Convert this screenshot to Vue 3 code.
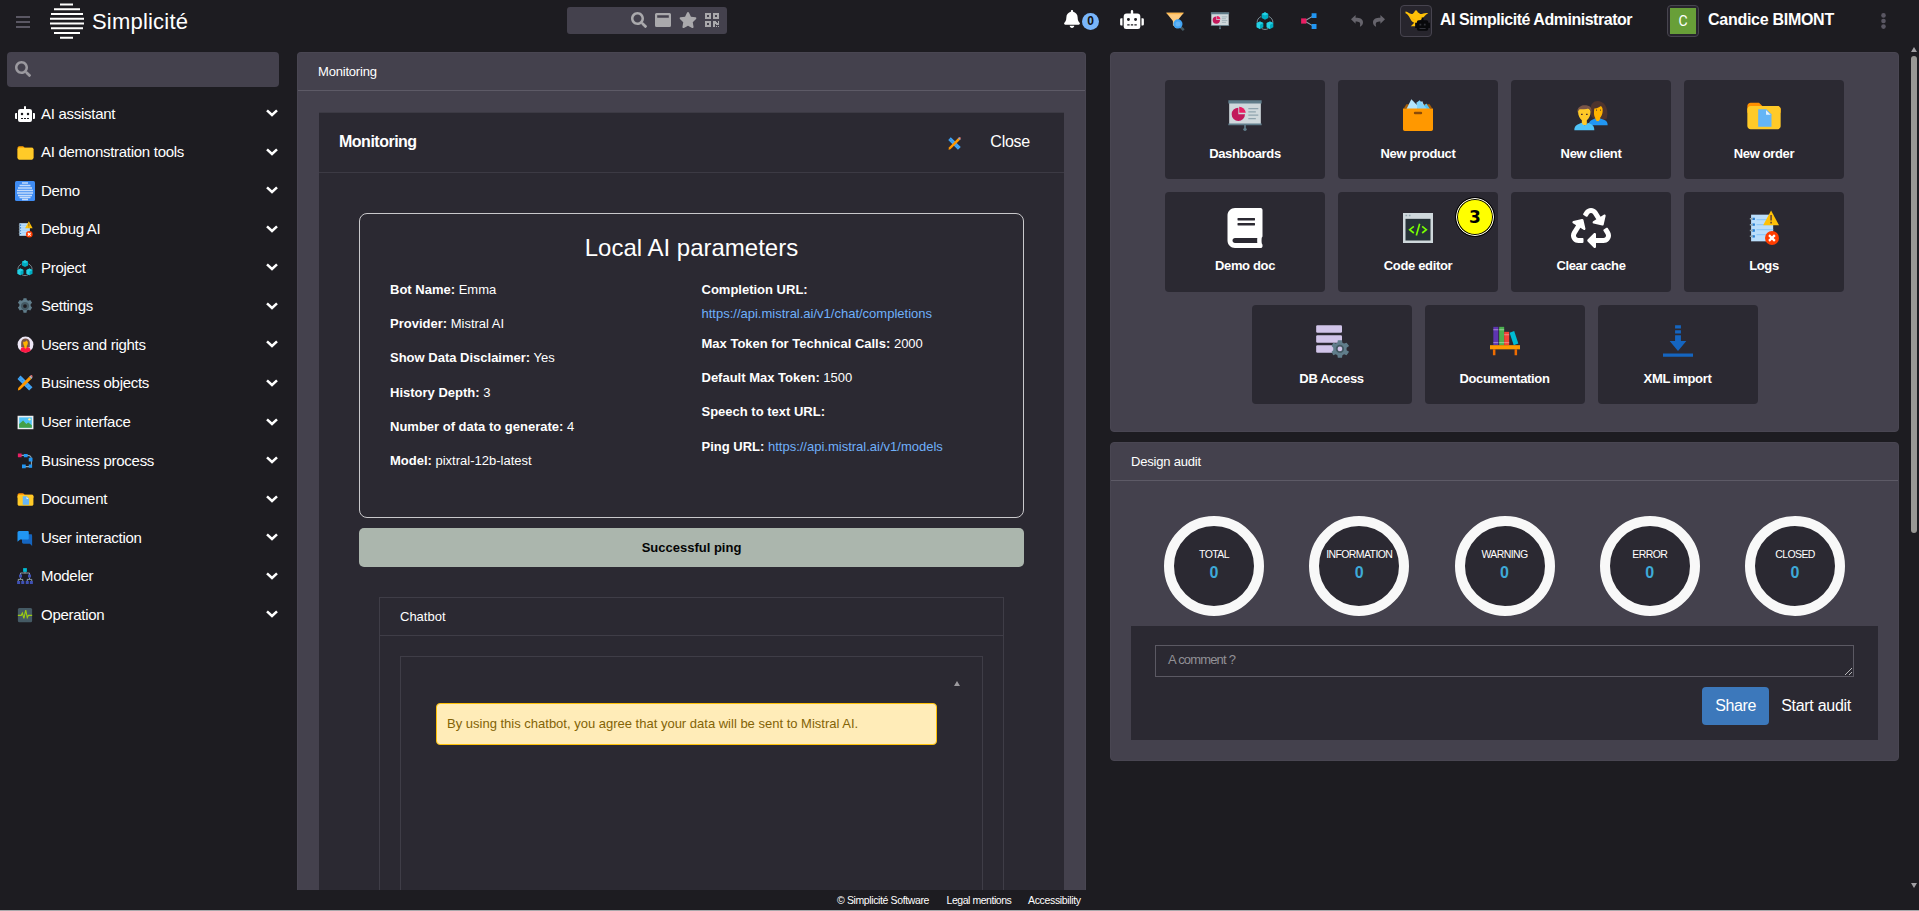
<script setup>
const menu = [
  { label: 'AI assistant', icon: 'robot', w: 20, h: 16 },
  { label: 'AI demonstration tools', icon: 'folder', w: 19, h: 19 },
  { label: 'Demo', icon: 'demo', w: 20, h: 20 },
  { label: 'Debug AI', icon: 'logs', w: 19, h: 19 },
  { label: 'Project', icon: 'project', w: 18, h: 18 },
  { label: 'Settings', icon: 'gear', w: 18, h: 18 },
  { label: 'Users and rights', icon: 'user', w: 19, h: 19 },
  { label: 'Business objects', icon: 'design', w: 18, h: 18 },
  { label: 'User interface', icon: 'picture', w: 19, h: 19 },
  { label: 'Business process', icon: 'process', w: 18, h: 18 },
  { label: 'Document', icon: 'docs', w: 19, h: 19 },
  { label: 'User interaction', icon: 'chat', w: 18, h: 18 },
  { label: 'Modeler', icon: 'tree', w: 18, h: 18 },
  { label: 'Operation', icon: 'pulse', w: 18, h: 18 }
]

const leftParams = [
  ['Bot Name:', 'Emma'],
  ['Provider:', 'Mistral AI'],
  ['Show Data Disclaimer:', 'Yes'],
  ['History Depth:', '3'],
  ['Number of data to generate:', '4'],
  ['Model:', 'pixtral-12b-latest']
]

const tileRows = [
  [
    { label: 'Dashboards', icon: 'board' },
    { label: 'New product', icon: 'product' },
    { label: 'New client', icon: 'clients' },
    { label: 'New order', icon: 'docs' }
  ],
  [
    { label: 'Demo doc', icon: 'book' },
    { label: 'Code editor', icon: 'code', badge: '3' },
    { label: 'Clear cache', icon: 'recycle' },
    { label: 'Logs', icon: 'logs' }
  ],
  [
    { label: 'DB Access', icon: 'db' },
    { label: 'Documentation', icon: 'shelf' },
    { label: 'XML import', icon: 'import' }
  ]
]

const gauges = ['TOTAL', 'INFORMATION', 'WARNING', 'ERROR', 'CLOSED']
</script>

<template>
  <div class="app">
    <svg class="sprite" aria-hidden="true">
      <symbol id="i-robot" viewBox="0 0 640 512"><path fill="currentColor" d="M32 224h32v192H32a31.96 31.96 0 0 1-32-32V256a31.96 31.96 0 0 1 32-32zm512-48v272a64.06 64.06 0 0 1-64 64H160a64.06 64.06 0 0 1-64-64V176a79.974 79.974 0 0 1 80-80h112V32a32 32 0 0 1 64 0v64h112a79.974 79.974 0 0 1 80 80zm-280 80a40 40 0 1 0-40 40 39.997 39.997 0 0 0 40-40zm-8 128h-64v32h64zm96 0h-64v32h64zm104-128a40 40 0 1 0-40 40 39.997 39.997 0 0 0 40-40zm-8 128h-64v32h64zm192-128v128a31.96 31.96 0 0 1-32 32h-32V224h32a31.96 31.96 0 0 1 32 32z" /></symbol>
      <symbol id="i-search" viewBox="0 0 512 512"><path fill="currentColor" d="M505 442.7L405.3 343c-4.5-4.5-10.6-7-17-7H372c27.6-35.3 44-79.7 44-128C416 93.1 322.9 0 208 0S0 93.1 0 208s93.1 208 208 208c48.3 0 92.7-16.4 128-44v16.3c0 6.4 2.5 12.5 7 17l99.7 99.7c9.4 9.4 24.6 9.4 33.9 0l28.3-28.3c9.4-9.4 9.4-24.6.1-34zM208 336c-70.7 0-128-57.2-128-128 0-70.7 57.2-128 128-128 70.7 0 128 57.2 128 128 0 70.7-57.2 128-128 128z" /></symbol>
      <symbol id="i-bell" viewBox="0 0 448 512"><path fill="currentColor" d="M224 512c35.32 0 63.97-28.65 63.97-64H160.03c0 35.35 28.65 64 63.97 64zm215.39-149.71c-19.32-20.76-55.47-51.99-55.47-154.29 0-77.7-54.48-139.9-127.94-155.16V32c0-17.67-14.32-32-31.98-32s-31.98 14.33-31.98 32v20.84C118.56 68.1 64.08 130.3 64.08 208c0 102.3-36.15 133.53-55.47 154.29-6 6.45-8.66 14.16-8.61 21.71.11 16.4 12.98 32 32.1 32h383.8c19.12 0 32-15.6 32.1-32 .05-7.55-2.61-15.27-8.61-21.71z" /></symbol>
      <symbol id="i-star" viewBox="0 0 576 512"><path fill="currentColor" d="M259.3 17.8L194 150.2 47.9 171.5c-26.2 3.8-36.7 36.1-17.7 54.6l105.7 103-25 145.5c-4.5 26.3 23.2 46 46.4 33.7L288 439.6l130.7 68.7c23.2 12.2 50.9-7.4 46.4-33.7l-25-145.5 105.7-103c19-18.5 8.5-50.8-17.7-54.6L382 150.2 316.7 17.8c-11.7-23.6-45.6-23.9-57.4 0z" /></symbol>
      <symbol id="i-window" viewBox="0 0 16 16"><path fill="currentColor" fill-rule="evenodd" d="M1.500 1h13A1.500 1.500 0 0 1 16 2.500v11a1.500 1.500 0 0 1-1.500 1.500h-13A1.500 1.500 0 0 1 0 13.500v-11A1.500 1.500 0 0 1 1.500 1zM2.200 3.300v2.500h11.600V3.300z" /></symbol>
      <symbol id="i-qr" viewBox="0 0 14 14"><path fill="currentColor" fill-rule="evenodd" d="M0 0h6v6H0zM2 2v2h2V2zM8 0h6v6H8zM10 2v2h2V2zM0 8h6v6H0zM2 10v2h2v-2zM8 8h3v1h1v1h1V8h1v4h-3v-1h-1v3H8zM11 13h1v1h-1zM13 13h1v1h-1z" /></symbol>
      <symbol id="i-undo" viewBox="0 0 12 12"><path fill="currentColor" d="M0 4.200 4.600 0v2.800c4.600 0 7.400 1.300 7.400 4.800 0 1.800-1.200 3.300-2.500 4-.4.300-.7 0-.6-.5 1.200-4-1-4.700-4.300-4.700v2.400z" /></symbol>
      <symbol id="i-book" viewBox="0 0 448 512"><path fill="currentColor" d="M448 360V24c0-13.300-10.700-24-24-24H96C43 0 0 43 0 96v320c0 53 43 96 96 96h328c13.300 0 24-10.700 24-24v-16c0-7.500-3.500-14.300-8.900-18.700-4.200-15.400-4.200-59.300 0-74.700 5.400-4.300 8.900-11.100 8.900-18.600zM128 134c0-3.300 2.700-6 6-6h212c3.300 0 6 2.700 6 6v20c0 3.300-2.700 6-6 6H134c-3.300 0-6-2.700-6-6v-20zm0 64c0-3.300 2.700-6 6-6h212c3.300 0 6 2.700 6 6v20c0 3.300-2.700 6-6 6H134c-3.300 0-6-2.700-6-6v-20zm253.400 250H96c-17.700 0-32-14.300-32-32 0-17.600 14.400-32 32-32h285.400c-1.900 17.100-1.900 46.900 0 64z" /></symbol>
      <symbol id="i-recycle" viewBox="0 0 512 512"><path fill="currentColor" d="M184.561 261.903c3.232 13.997-12.123 24.635-24.068 17.168l-40.736-25.455-50.867 81.402C55.606 356.273 70.96 384 96.012 384H148c6.627 0 12 5.373 12 12v40c0 6.627-5.373 12-12 12H96.115c-75.334 0-121.302-83.048-81.408-146.88l50.822-81.388-40.725-25.448c-12.081-7.547-8.966-25.961 4.879-29.158l110.237-25.45c8.611-1.988 17.201 3.381 19.189 11.99l25.452 110.237zm98.561-182.915l41.289 66.076-40.74 25.457c-12.051 7.528-9 25.953 4.879 29.158l110.237 25.45c8.672 1.999 17.215-3.438 19.189-11.99l25.45-110.237c3.197-13.844-11.99-24.719-24.068-17.168l-40.687 25.424-41.263-66.082c-37.521-60.033-125.209-60.171-162.816 0l-17.963 28.766c-3.51 5.62-1.8 13.021 3.82 16.533l33.919 21.195c5.62 3.512 13.024 1.803 16.536-3.817l17.961-28.743c12.712-20.341 41.973-19.676 54.257-.022zM497.288 301.12l-27.515-44.065c-3.511-5.623-10.916-7.334-16.538-3.821l-33.861 21.159c-5.62 3.512-7.33 10.915-3.818 16.536l27.564 44.112c13.257 21.211-2.057 48.96-27.136 48.96H320V336.02c0-14.213-17.242-21.383-27.313-11.313l-80 79.981c-6.249 6.248-6.249 16.379 0 22.627l80 79.989C302.689 517.308 320 510.3 320 495.989V448h95.88c75.274 0 121.335-82.997 81.408-146.88z" /></symbol>
      <symbol id="i-folder" viewBox="0 0 48 48"><path fill="#ffa000" d="M40 12H22l-4-4H8c-2.200 0-4 1.800-4 4v26h40V16c0-2.200-1.800-4-4-4z" /><path fill="#ffca28" d="M40 12H8c-2.200 0-4 1.800-4 4v22c0 2.200 1.800 4 4 4h32c2.200 0 4-1.800 4-4V16c0-2.200-1.800-4-4-4z" /></symbol>
      <symbol id="i-docs" viewBox="0 0 48 48"><path fill="#ff8f00" d="M40 12H22l-4-4H8c-2.200 0-4 1.800-4 4v8h40v-4c0-2.200-1.800-4-4-4z" /><path fill="#ffca28" d="M40 12H8c-2.200 0-4 1.800-4 4v20c0 2.200 1.800 4 4 4h32c2.200 0 4-1.800 4-4V16c0-2.200-1.800-4-4-4z" /><path fill="#64b5f6" d="M33 37H17V16h10l6 6z" /><path fill="#e3f2fd" d="M32 22.500h-5.500V17z" /></symbol>
      <symbol id="i-demo" viewBox="0 0 20 20"><rect width="20" height="20" rx="1.500" fill="#3f8cf3" /><path stroke="#c5dcfb" stroke-width="1.300" d="M7 2h6M4.500 4.500h11M3 7h14M2 9.500h16M2 12h16M3 14.500h14M4.500 16.500h11M7 18.500h6" /></symbol>
      <symbol id="i-logs" viewBox="0 0 48 48"><path fill="#bbdefb" d="M8.500 8H35v32H8.500z" /><path stroke="#90caf9" stroke-width="1.500" d="M15 14h20M15 20h20M15 26h20M15 32h20" /><path stroke="#1976d2" stroke-width="2.800" d="M10 13h3M10 20h3M10 27h3M10 34h3" /><path stroke="#90a4ae" stroke-width="1.800" d="M7 13h4M7 20h4M7 27h4M7 34h4" /><path fill="#ffc107" d="M32.500 3 42 20.600H23z" /><path stroke="#5d4037" stroke-width="1.800" d="M32.500 8.500v6.500M32.500 16.500v2" /><circle cx="33.600" cy="36" r="8.400" fill="#ff3d00" /><path stroke="#fff" stroke-width="2.700" d="m30 32.500 7 7m0-7-7 7" /></symbol>
      <symbol id="i-project" viewBox="0 0 48 48"><path fill="none" stroke="#90a4ae" stroke-width="2" d="M15 13C8 16 5 22 5 28M33 13c7 3 10 9 10 15M16 42c5 3 11 3 16 0" /><path fill="#00acc1" d="m24 3 8 4v10l-8 4-8-4V7zM12 25l8 4v10l-8 4-8-4V29zM36 25l8 4v10l-8 4-8-4V29z" /><path fill="#26d0e3" d="m24 3 8 4-8 4-8-4zM12 25l8 4-8 4v10l-8-4V29zM36 25l8 4-8 4v10l-8-4V29z" /></symbol>
      <symbol id="i-gear" viewBox="0 0 48 48"><path fill="#607d8b" d="m20 3-1 5-4 2-5-2-5 7 4 4v5l-4 4 5 8 5-2 4 2 1 6h8l1-6 4-2 5 2 5-8-4-4v-5l4-4-5-7-5 2-4-2-1-5z" /><circle cx="24" cy="24" r="11" fill="#455a64" /><circle cx="24" cy="24" r="5" fill="#1d1c21" /></symbol>
      <symbol id="i-user" viewBox="0 0 48 48"><circle cx="24" cy="24" r="20" fill="#ede7f6" /><path fill="#795548" d="M13 31V20c0-15 22-15 22 0v11z" /><path fill="#ff1744" d="M11 39c1-9 7-9 13-9s12 0 13 9c-7 7-19 7-26 0z" /><path fill="#ffb300" d="M18 17c7 0 8-3 9-4 1 3 3 3 3 6 0 5-2 8-3 9v4l-3 3-3-3v-4c-2-2-3-6-3-11z" /></symbol>
      <symbol id="i-design" viewBox="0 0 48 48"><path fill="#42a5f5" d="m12 4 32 31-9 9L4 13z" /><path stroke="#1976d2" stroke-width="2" d="m12 10-3 3m9 3-3 3m16 9-3 3m9 3-3 3" /><path fill="#ff9800" d="m35 7 6 6-30 29-6 2 1-7z" /><path fill="#b0bec5" d="m35 7 3-3 6 6-3 3z" /><path fill="#e57373" d="m38 4 2-1c2-1 5 2 4 4l-1 3z" /></symbol>
      <symbol id="i-picture" viewBox="0 0 48 48"><path fill="#eceff1" d="M4 7h40v34H4z" /><path fill="#4fc3f7" d="M8 11h32v26H8z" /><path fill="#43a047" d="m8 28 10-9 8 9 5-4 9 7v6H8z" /><circle cx="34" cy="16" r="3" fill="#fff59d" /></symbol>
      <symbol id="i-process" viewBox="0 0 48 48"><path fill="none" stroke="#90a4ae" stroke-width="3" d="M10 9h20c14 0 11 9 11 30H22" /><path fill="#e91e63" d="M5 4h10v10H5z" /><path fill="#2196f3" d="M21 5h10v9H21zM34 15h10v10H34zM34 33h9v9h-9zM16 33h10v10H16z" /></symbol>
      <symbol id="i-chat" viewBox="0 0 48 48"><path fill="#1565c0" d="M42 14H20c-2 0-4 2-4 4v17c0 2 2 4 4 4h17l6 6V18z" /><path fill="#2196f3" d="M8 5h23c2 0 3 1 3 3v17c0 2-1 3-3 3H11l-7 6V9c0-2 2-4 4-4z" /></symbol>
      <symbol id="i-tree" viewBox="0 0 48 48"><path fill="none" stroke="#90a4ae" stroke-width="2.500" d="M24 12v5M12 21v-5h24v5M12 28v4m-6 8v-7h12v7M36 28v4m-6 8v-7h12v7" /><path fill="#00bcd4" d="M19 3h10v10H19z" /><path fill="#3f51b5" d="M8 20h8v8H8zM32 20h8v8h-8zM3 37h8v8H3zM14 37h8v8h-8zM26 37h8v8h-8zM37 37h8v8h-8z" /></symbol>
      <symbol id="i-pulse" viewBox="0 0 48 48"><rect x="5" y="5" width="38" height="38" rx="4" fill="#455a64" /><path fill="none" stroke="#9ccc10" stroke-width="3" d="M5 25h9l3-6 4 14 5-22 4 20 3-6h10" /></symbol>
      <symbol id="i-funnel" viewBox="0 0 48 48"><path fill="#ffcc80" d="M3 4h42L29 24v18L19 34V24z" /><path fill="#ffb74d" d="M3 4h42l-3 4H6z" /><path stroke="#455a64" stroke-width="6" d="m36 37 9 9" /><circle cx="31" cy="31" r="11" fill="#42a5f5" /><circle cx="31" cy="31" r="6" fill="#64b5f6" /></symbol>
      <symbol id="i-board" viewBox="0 0 48 48"><path fill="#cfd8dc" d="M5 6h38v28H5z" /><path fill="#607d8b" d="M4 5h40v4H4zM4 33h40v2H4zM23 35h2v4h-2z" /><circle cx="24" cy="40" r="2" fill="#607d8b" /><path fill="#c2185b" d="M16 14v8h8a8 8 0 1 1-8-8z" /><path fill="#e91e63" d="M17 13a8 8 0 0 1 8 7h-8z" /><path stroke="#90a4ae" stroke-width="1.500" d="M28 15h12M28 19h9M28 23h12M28 27h9" /></symbol>
      <symbol id="i-share" viewBox="0 0 48 48"><path fill="none" stroke="#90a4ae" stroke-width="3" d="M38 9 12 24l26 15" /><path fill="#e91e63" d="M3 17h14v14H3z" /><path fill="#2196f3" d="M31 3h13v13H31zM31 32h13v13H31z" /></symbol>
      <symbol id="i-lamp" viewBox="0 0 32 32"><path fill="#ffc107" d="M4 5c4 1 5 3 8 3l2-2 1-2h2l1 2 3 2c3 0 5-2 9-1-3 1-4 4-7 6-2 2-3 3-6 4l1 3 3 2H10l4-4C9 16 9 9 4 7z" /><path fill="#f9a000" d="M9 9c2 5 5 6 9 6-5 1-8-2-9-6z" /><rect x="17" y="15" width="13" height="12" rx="2" fill="#08090b" /><path fill="#08090b" d="M15 18h17v6H15zM22.500 12h2v4h-2z" /><path fill="#33343a" d="M20 19h2v2h-2zM25 19h2v2h-2zM20 24h7v1h-7z" /></symbol>
      <symbol id="i-product" viewBox="0 0 48 48"><path fill="#a65e0a" d="m7 15 3-5h28l3 5z" /><path fill="#b3e5fc" d="m9 18 7-14 7 7 6-5 5 12z" /><path fill="#4fc3f7" d="m26 7 5 5 3-3 6 9H22z" /><path fill="#81d4fa" d="m22 8 4-3 10 12H24z" /><path fill="#ff9800" d="M6 15h36v25c0 1-1 2-2 2H8c-1 0-2-1-2-2z" /><path stroke="#8a4b08" stroke-width="3" stroke-linecap="round" d="M20.500 20.500h7" /></symbol>
      <symbol id="i-clients" viewBox="0 0 48 48"><path fill="#4e342e" d="M24 24c-3-13 2-18 8-18s14 6 11 21l-7 3-8-2z" /><path fill="#ffb300" d="M28 15c4 0 6-2 8-3 2 2 2 3 2 6 0 4-2 7-3 8v5h-6v-5c-1-1-2-5-1-11z" /><path fill="#2196f3" d="M21 35c1-6 4-6 8-8 2 5 5 4 6 0 5 2 9 2 9 8z" /><path fill="#ffca28" d="M8.500 19c0-7 15-7 15 0 0 5-2 8-4.500 10v6h-6v-6c-2.500-2-4.500-5-4.500-10z" /><path fill="#795548" d="M8 21c-2-8 5-10 8-10 7 0 10 3 8 10 0-4-1-5-3-6-3 1-8 1-11 1-1 1-2 2-2 5z" /><path fill="#4fc3f7" d="M4 41c0-6 4-7 9-9 1 4 6 4 7 0 5 2 8 3 8 9z" /><path stroke="#4e342e" stroke-width="1.500" d="M12 22h2m4 0h2M30 17h1m4 0h1" /></symbol>
      <symbol id="i-code" viewBox="0 0 48 48"><path fill="#cfd8dc" d="M6 6h36v36H6z" /><path fill="#263238" d="M9 13h30v26H9z" /><path stroke="#90a4ae" stroke-width="2" d="M9 9h2m2 0h2" /><path fill="none" stroke="#76ff03" stroke-width="2" d="m19 22-5 4 5 4M29 22l5 4-5 4M26 19l-4 14" /></symbol>
      <symbol id="i-db" viewBox="0 0 48 48"><rect x="5" y="5" width="31" height="9" rx="1.500" fill="#d1c4e9" /><rect x="5" y="17" width="31" height="9" rx="1.500" fill="#d1c4e9" /><rect x="5" y="29" width="31" height="9" rx="1.500" fill="#d1c4e9" /><path fill="#607d8b" d="m31 23-.5 3-2 1-3-1-2 4 2 2v3l-2 2 2 4 3-1 2 1 .5 3h5l.5-3 2-1 3 1 3-4-3-2v-3l3-2-3-4-3 1-2-1-.5-3z" /><circle cx="33.500" cy="33.500" r="5" fill="#455a64" /><circle cx="33.500" cy="33.500" r="2.800" fill="#d1c4e9" /></symbol>
      <symbol id="i-shelf" viewBox="0 0 48 48"><path fill="#5e35b1" d="M10 7h6v22h-6z" /><path fill="#4caf50" d="M17 7h6v22h-6z" /><path fill="#f44336" d="M23 13h6v16h-6z" /><path fill="#00bcd4" d="m29.500 14 5.500-2 5 15-5.500 2z" /><path stroke="#b39ddb" stroke-width="1" d="M10 10.500h6M10 26h6" /><path stroke="#a5d6a7" stroke-width="1" d="M17 10.500h6M17 26h6" /><path stroke="#ef9a9a" stroke-width="1" d="M23 16.500h6M23 26h6" /><path fill="#ff9800" d="M6 29h36v5H6z" /><path fill="#ef6c00" d="M9.500 34h3v7h-3zM35.500 34h3v7h-3z" /></symbol>
      <symbol id="i-import" viewBox="0 0 48 48"><path fill="#1565c0" d="M20.500 5h7v4h-7zM20.500 11h7v4h-7zM20.500 17h7v7H34L24 36 14 24h6.500zM6 39h36v4H6z" /></symbol>
    </svg>

    <header class="topbar">
      <svg class="burger" viewBox="0 0 14 12"><path stroke="#5a5763" stroke-width="1.800" d="M0 1h14M0 6h14M0 11h14" /></svg>
      <svg class="logo" viewBox="0 0 34 36"><path stroke="#fff" stroke-width="2.100" d="M10 1.500h13M4 6.300h26M1 11h32M0 15.800h34M0 20.500h34M1 25.300h32M4 30h26M10 34.800h13" /></svg>
      <span class="brand">Simplicité</span>
      <div class="quick">
        <svg class="q16"><use href="#i-search" /></svg>
        <svg class="q16"><use href="#i-window" /></svg>
        <svg class="q18"><use href="#i-star" /></svg>
        <svg class="q14"><use href="#i-qr" /></svg>
      </div>
      <div class="tools">
        <svg class="bell"><use href="#i-bell" /></svg>
        <span class="count">0</span>
        <svg class="bot"><use href="#i-robot" /></svg>
        <svg class="t20"><use href="#i-funnel" /></svg>
        <svg class="t22"><use href="#i-board" /></svg>
        <svg class="t20 prj"><use href="#i-project" /></svg>
        <svg class="t18"><use href="#i-share" /></svg>
        <svg class="arrow"><use href="#i-undo" /></svg>
        <svg class="arrow flip"><use href="#i-undo" /></svg>
      </div>
      <div class="avatar"><svg class="lamp"><use href="#i-lamp" /></svg></div>
      <span class="who scope">AI Simplicité Administrator</span>
      <div class="avatar second"><span class="initial">C</span></div>
      <span class="who person">Candice BIMONT</span>
      <svg class="dots" viewBox="0 0 5 16"><g fill="#5a5763"><circle cx="2.500" cy="2.400" r="2.300" /><circle cx="2.500" cy="8" r="2.300" /><circle cx="2.500" cy="13.600" r="2.300" /></g></svg>
    </header>

    <div class="body">
      <nav class="side">
        <div class="find"><svg class="q16"><use href="#i-search" /></svg></div>
        <div v-for="m in menu" :key="m.label" class="item">
          <span class="cell"><svg :width="m.w" :height="m.h"><use :href="'#i-' + m.icon" /></svg></span>
          <span class="name">{{ m.label }}</span>
          <svg class="chev" viewBox="0 0 12 8"><path fill="none" stroke="#fff" stroke-width="2.500" d="m1 1.300 5 4.700 5-4.700" /></svg>
        </div>
      </nav>

      <main class="panel main">
        <div class="head">Monitoring</div>
        <section class="card">
          <div class="cardhead">
            <b>Monitoring</b>
            <svg class="tool"><use href="#i-design" /></svg>
            <span class="close">Close</span>
          </div>
          <div class="params">
            <h2>Local AI parameters</h2>
            <div class="cols">
              <div class="col">
                <p v-for="p in leftParams" :key="p[0]"><b>{{ p[0] }}</b> {{ p[1] }}</p>
              </div>
              <div class="col">
                <p class="tall"><b>Completion URL:</b><br><a>https://api.mistral.ai/v1/chat/completions</a></p>
                <p><b>Max Token for Technical Calls:</b> 2000</p>
                <p><b>Default Max Token:</b> 1500</p>
                <p><b>Speech to text URL:</b></p>
                <p><b>Ping URL:</b> <a>https://api.mistral.ai/v1/models</a></p>
              </div>
            </div>
          </div>
          <div class="ping">Successful ping</div>
          <div class="chat">
            <div class="chathead">Chatbot</div>
            <div class="chatbox">
              <svg class="up" viewBox="0 0 6 5"><path fill="#9c9a9e" d="M3 0l3 5H0z" /></svg>
              <div class="alert">By using this chatbot, you agree that your data will be sent to Mistral AI.</div>
            </div>
          </div>
        </section>
      </main>

      <div class="right">
        <section class="panel tiles">
          <div v-for="(row, i) in tileRows" :key="i" class="row">
            <div v-for="t in row" :key="t.label" class="tile">
              <svg class="pic"><use :href="'#i-' + t.icon" /></svg>
              <span>{{ t.label }}</span>
              <i v-if="t.badge" class="badge">{{ t.badge }}</i>
            </div>
          </div>
        </section>
        <section class="panel audit">
          <div class="head">Design audit</div>
          <div class="gauges">
            <div v-for="g in gauges" :key="g" class="gauge"><span>{{ g }}</span><b>0</b></div>
          </div>
          <div class="form">
            <div class="area">A comment ?<svg class="grip" viewBox="0 0 7 7"><path stroke="#c8c8c8" stroke-width=".9" d="M0 7 7 0M4 7l3-3" /></svg></div>
            <div class="actions"><button class="share">Share</button><span>Start audit</span></div>
          </div>
        </section>
      </div>

      <div class="scroll">
        <svg class="tri" viewBox="0 0 6 5"><path fill="#a09ea2" d="M3 0l3 5H0z" /></svg>
        <div class="thumb"></div>
        <svg class="tri end" viewBox="0 0 6 5"><path fill="#a09ea2" d="M0 0h6L3 5z" /></svg>
      </div>
    </div>

    <footer>
      <span class="f1">© Simplicité Software</span><span class="f2">Legal mentions</span><span class="f3">Accessibility</span>
    </footer>
  </div>
</template>

<style>
body { margin: 0; background: #1d1c21; }
</style>

<style scoped>
.app { width: 1919px; height: 911px; box-sizing: border-box; border-bottom: 1px solid #a9a8ab; overflow: hidden; background: #1d1c21; color: #fff; font-family: "Liberation Sans", Arial, sans-serif; display: flex; flex-direction: column; position: relative; }
.app * { box-sizing: border-box; }
svg { display: block; flex: none; }
span, b, .head { white-space: nowrap; }
.sprite { position: absolute; width: 0; height: 0; }

.topbar { height: 52px; flex: none; display: flex; align-items: flex-start; }
.burger { width: 14px; height: 12px; margin: 16px 0 0 16px; }
.logo { width: 34px; height: 36px; margin: 3px 0 0 20px; }
.brand { font-size: 22px; line-height: 26px; letter-spacing: .2px; margin: 9px 0 0 8px; width: 475px; }
.quick { width: 160px; height: 27px; margin-top: 7px; background: #44414d; border-radius: 3px; color: #aaa9ac; display: flex; align-items: center; padding-left: 64px; gap: 8px; padding-bottom: 1px; }
.q16 { width: 16px; height: 16px; }
.q18 { width: 18px; height: 16px; }
.q14 { width: 14px; height: 14px; }
.tools { display: flex; align-items: center; height: 42px; margin-left: 337px; width: 336px; }
.bell { width: 16px; height: 18px; margin-bottom: 4px; }
.count { width: 17px; height: 17px; margin: 1px 0 0 2px; border-radius: 50%; background: #79b6fb; color: #111; font-size: 12px; font-weight: 700; line-height: 17px; text-align: center; }
.bot { width: 24px; height: 19px; margin: 0 21px 3px 21px; }
.t20 { width: 20px; height: 20px; }
.t22 { width: 22px; height: 22px; margin-left: 24px; }
.prj { margin-left: 24px; }
.t18 { width: 18px; height: 18px; margin-left: 25px; }
.arrow { width: 12px; height: 12px; color: #66646c; margin-left: 33px; }
.flip { transform: scaleX(-1); margin-left: 10px; }
.avatar { width: 32px; height: 32px; margin-top: 5px; border: 1px solid #47444f; border-radius: 4px; background: #27252d; display: flex; align-items: center; justify-content: center; }
.lamp { width: 28px; height: 28px; }
.initial { width: 26px; height: 26px; background: #689f38; font-family: Roboto, sans-serif; font-size: 14px; line-height: 27px; text-align: center; }
.who { font-size: 16px; font-weight: 700; line-height: 20px; margin: 10px 0 0 8px; }
.scope { letter-spacing: -.47px; width: 227px; }
.person { letter-spacing: -.28px; width: 173px; margin-left: 9px; }
.dots { width: 5px; height: 16px; margin-top: 13px; }

.body { height: 838px; flex: none; display: flex; align-items: flex-start; }
.side { width: 297px; padding-left: 7px; flex: none; }
.find { width: 272px; height: 35px; background: #44414d; border-radius: 4px; color: #9b999f; padding: 9px 0 0 8px; margin-bottom: 7px; }
.item { width: 272px; height: 38.540px; display: flex; align-items: center; padding: 0 1px 0 8px; }
.cell { width: 20px; display: flex; justify-content: center; margin-top: 1px; }
.name { flex: 1; margin-left: 6px; font-size: 15px; letter-spacing: -.28px; }
.chev { width: 12px; height: 8px; }

.panel { background: #44414d; border-radius: 4px; width: 789px; border: 1px solid #494652; }
.head { height: 38px; line-height: 37px; padding-left: 20px; font-size: 13px; letter-spacing: -.2px; border-bottom: 1px solid #5d5a66; }
.main { height: 838px; flex: none; overflow: hidden; border-bottom: 0; border-radius: 4px 4px 0 0; }
.card { width: 745px; margin: 21px 0 0 21px; height: 800px; background: #2b2932; }
.cardhead { height: 61px; border-bottom: 1px solid #3c3a44; border-top: 1px solid #3c3a44; display: flex; align-items: center; padding: 0 34px 2px 20px; font-size: 16px; letter-spacing: -.5px; }
.cardhead b { flex: 1; }
.tool { width: 15px; height: 15px; margin: 3px 28px 0 0; }
.close { letter-spacing: -.25px; }
.params { width: 665px; height: 305px; margin: 40px 0 0 40px; border: 1px solid #c9c8cb; border-radius: 8px; padding: 20px 30px 0; }
h2 { margin: 0; font-weight: 400; font-size: 24px; line-height: 28px; text-align: center; }
.cols { display: grid; grid-template-columns: 311.500px 1fr; margin-top: 16px; }
p { margin: 0; height: 34.200px; font-size: 13px; line-height: 24.400px; white-space: nowrap; }
.tall { height: 54px; }
a { color: #6fb0fa; }
.ping { width: 665px; height: 39px; margin: 10px 0 0 40px; border-radius: 5px; background: #abb6ad; color: #050505; font-size: 13px; font-weight: 700; text-align: center; line-height: 39px; }
.chat { width: 625px; height: 400px; margin: 30px 0 0 60px; border: 1px solid #3f3d47; }
.chathead { height: 38px; line-height: 38px; padding-left: 20px; font-size: 13px; border-bottom: 1px solid #3f3d47; }
.chatbox { width: 583px; height: 340px; margin: 20px 0 0 20px; border: 1px solid #3f3d47; padding-top: 24px; }
.up { width: 6px; height: 5px; margin-left: 553px; }
.alert { width: 501px; height: 42px; margin: 17px 0 0 35px; border: 1px solid #ffc107; border-radius: 4px; background: #ffecb8; color: #836306; font-size: 13px; line-height: 39px; padding-left: 10px; white-space: nowrap; }

.right { width: 789px; margin-left: 24px; flex: none; display: flex; flex-direction: column; gap: 10px; }
.tiles { height: 380px; padding-top: 27px; display: flex; flex-direction: column; gap: 13px; }
.row { display: flex; justify-content: center; gap: 13px; }
.tile { position: relative; width: 160px; height: 99.400px; border-radius: 4px; background: #2b2932; display: flex; flex-direction: column; align-items: center; padding-top: 16px; font-size: 13px; font-weight: 700; letter-spacing: -.35px; }
.tile span { margin-top: 9px; line-height: 17px; }
.pic { width: 40px; height: 40px; }
.badge { position: absolute; right: 4px; top: 6px; width: 38px; height: 38px; border-radius: 50%; background: #ff0; border: 1px solid #fff; outline: 1px solid #000; box-shadow: inset 0 0 0 1px #000; color: #000; font: 700 17px/36px "DejaVu Sans", sans-serif; letter-spacing: 0; text-align: center; }
.audit { height: 319px; }
.gauges { display: flex; gap: 45.250px; margin: 35px 0 0 53px; }
.gauge { width: 100px; height: 100px; border-radius: 50%; border: 10px solid #f8f8f8; background: #2b2932; display: flex; flex-direction: column; align-items: center; padding-top: 22px; }
.gauge span { font-size: 10.500px; line-height: 12px; letter-spacing: -.6px; }
.gauge b { font-size: 16px; line-height: 18px; margin-top: 4px; color: #3eaad8; }
.form { width: 747px; height: 114px; margin: 10px 0 0 20px; background: #2b2932; padding: 19px 24px 0; }
.area { position: relative; height: 32px; border: 1px solid #5b5963; color: #929196; font-size: 13px; line-height: 28px; letter-spacing: -.85px; word-spacing: .3px; padding-left: 12px; }
.grip { position: absolute; right: 1px; bottom: 1px; width: 7px; height: 7px; }
.actions { display: flex; justify-content: flex-end; align-items: center; margin-top: 10px; font-size: 16px; letter-spacing: -.28px; padding-right: 3px; gap: 12px; }
.share { width: 67px; height: 38px; border: 0; padding: 0; border-radius: 4px; background: #3c78bb; color: #fff; font: inherit; letter-spacing: -.4px; }
.actions span, .share { line-height: 36px; }

.scroll { width: 6px; height: 838px; margin-left: 12px; margin-top: -5px; display: flex; flex-direction: column; }
.tri { width: 6px; height: 5px; }
.thumb { height: 477px; margin: 4px 0 350px; border-radius: 3px; background: #999895; flex: none; }

footer { display: flex; height: 20px; padding-left: 837px; font-size: 10.500px; line-height: 20px; }
.f1 { width: 109.500px; letter-spacing: -.38px; }
.f2 { width: 81.500px; letter-spacing: -.45px; }
.f3 { letter-spacing: -.34px; }
</style>
